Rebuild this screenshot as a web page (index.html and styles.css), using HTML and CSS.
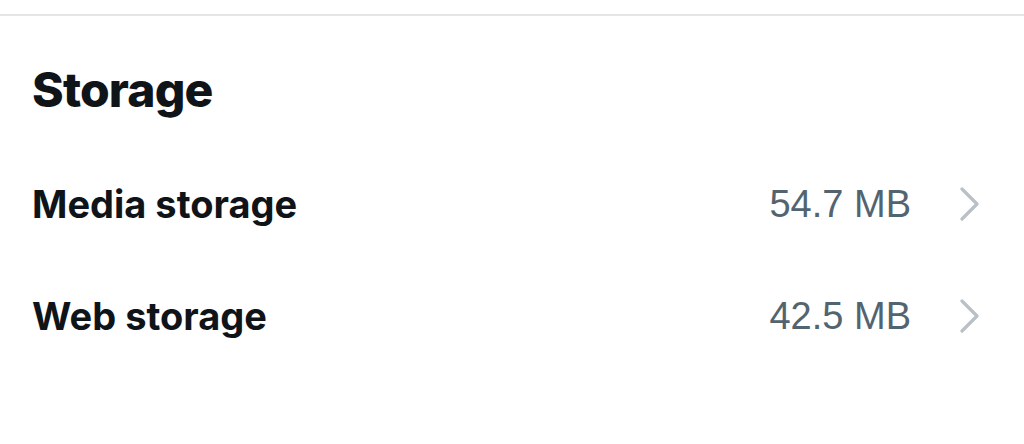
FILE: index.html
```html
<!DOCTYPE html>
<html lang="en">

<head>
    <meta charset="UTF-8">
    <meta name="viewport" content="width=device-width, initial-scale=1.0">
    <title>Storage</title>
    <link rel="stylesheet" href="styles.css">
</head>

<body>
    <div class="topbar"></div>
    <div class="section">
        <h1 class="title">Storage</h1>
        <a class="row" href="#">
            <span class="label">Media storage</span>
            <span class="value">54.7 MB</span>
            <svg class="chevron" width="20" height="34" viewBox="0 0 20 34">
                <polyline points="2,2 17,17 2,32" fill="none" stroke="#b9c0c6" stroke-width="3.2" stroke-linecap="round" stroke-linejoin="round" />
            </svg>
        </a>
        <a class="row" href="#">
            <span class="label">Web storage</span>
            <span class="value">42.5 MB</span>
            <svg class="chevron" width="20" height="34" viewBox="0 0 20 34">
                <polyline points="2,2 17,17 2,32" fill="none" stroke="#b9c0c6" stroke-width="3.2" stroke-linecap="round" stroke-linejoin="round" />
            </svg>
        </a>
    </div>
</body>

</html>
```
FILE: styles.css
```css
body {
    background-color: #ffffff;
    color: #0f1419;
    font-family: Inter, "Noto Sans", sans-serif;
    margin: 0;
    padding: 0;
}

.topbar {
    height: 14px;
    border-bottom: 2px solid #e3e5e7;
}

.section {
    padding-top: 46px;
}

.title {
    margin: 0;
    padding: 0 32px;
    font-size: 48px;
    line-height: 56px;
    font-weight: 800;
    letter-spacing: -0.8px;
}

.row {
    display: flex;
    align-items: center;
    height: 112px;
    padding: 0 44px 0 32px;
    margin-top: 30px;
    color: inherit;
    text-decoration: none;
}

.row + .row {
    margin-top: 0;
}

.label {
    flex: 1;
    font-size: 38px;
    font-weight: 700;
}

.value {
    font-family: "Liberation Sans", Arial, sans-serif;
    font-size: 38px;
    color: #536471;
    margin-right: 49px;
}
```
